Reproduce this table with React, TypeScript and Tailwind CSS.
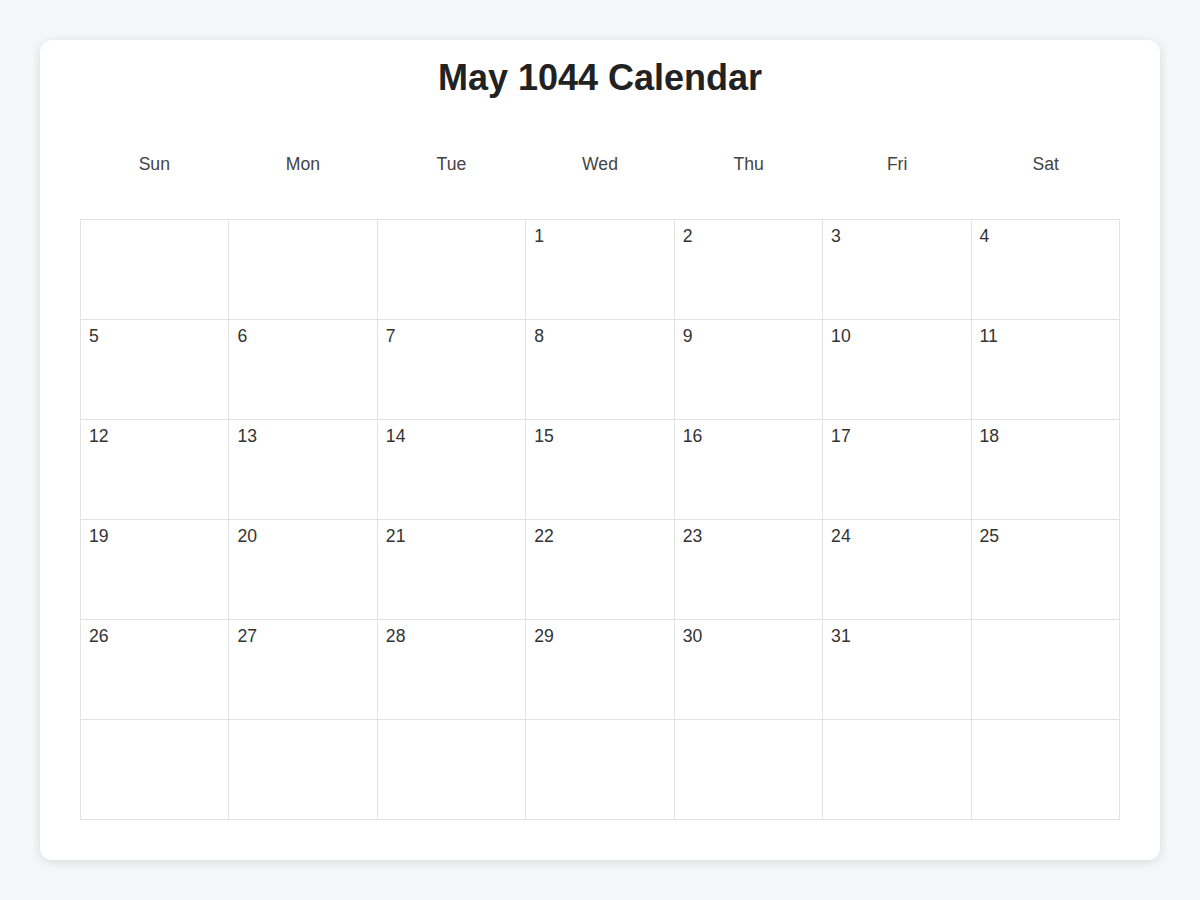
const days = ["Sun", "Mon", "Tue", "Wed", "Thu", "Fri", "Sat"];

// May 1044 starts on a Wednesday
const startOffset = 3;
const daysInMonth = 31;

function buildWeeks(): (number | null)[][] {
  const cells: (number | null)[] = [];
  for (let i = 0; i < startOffset; i++) cells.push(null);
  for (let d = 1; d <= daysInMonth; d++) cells.push(d);
  while (cells.length < 42) cells.push(null);
  const weeks: (number | null)[][] = [];
  for (let i = 0; i < 42; i += 7) weeks.push(cells.slice(i, i + 7));
  return weeks;
}

export default function App() {
  const weeks = buildWeeks();

  return (
    <div
      className="min-h-[900px] w-full bg-[#f6f7f9] p-10"
      style={{ fontFamily: '"Liberation Sans", Arial, sans-serif' }}
    >
      <div className="h-[820px] rounded-xl bg-white px-10 pt-[18px] shadow-[0_2px_12px_rgba(0,0,0,0.12)]">
        {/* Title */}
        <h1 className="h-10 text-center text-4xl font-bold leading-10 text-[#222]">
          May 1044 Calendar
        </h1>

        {/* Weekday header */}
        <div className="mt-[43px] mb-[34px] grid h-[44px] grid-cols-7">
          {days.map((d) => (
            <div
              key={d}
              className="flex items-center justify-center pt-[2px] text-[17.6px] leading-5 text-[#444]"
            >
              {d}
            </div>
          ))}
        </div>

        {/* Days */}
        <table className="w-full table-fixed border-collapse">
          <tbody>
            {weeks.map((week, wi) => (
              <tr key={wi}>
                {week.map((day, di) => (
                  <td
                    key={di}
                    className="h-[100px] border border-[#e3e3e3] px-[8px] pt-[6px] align-top text-[17.6px] leading-5 text-[#333]"
                  >
                    {day ?? ""}
                  </td>
                ))}
              </tr>
            ))}
          </tbody>
        </table>
      </div>
    </div>
  );
}
